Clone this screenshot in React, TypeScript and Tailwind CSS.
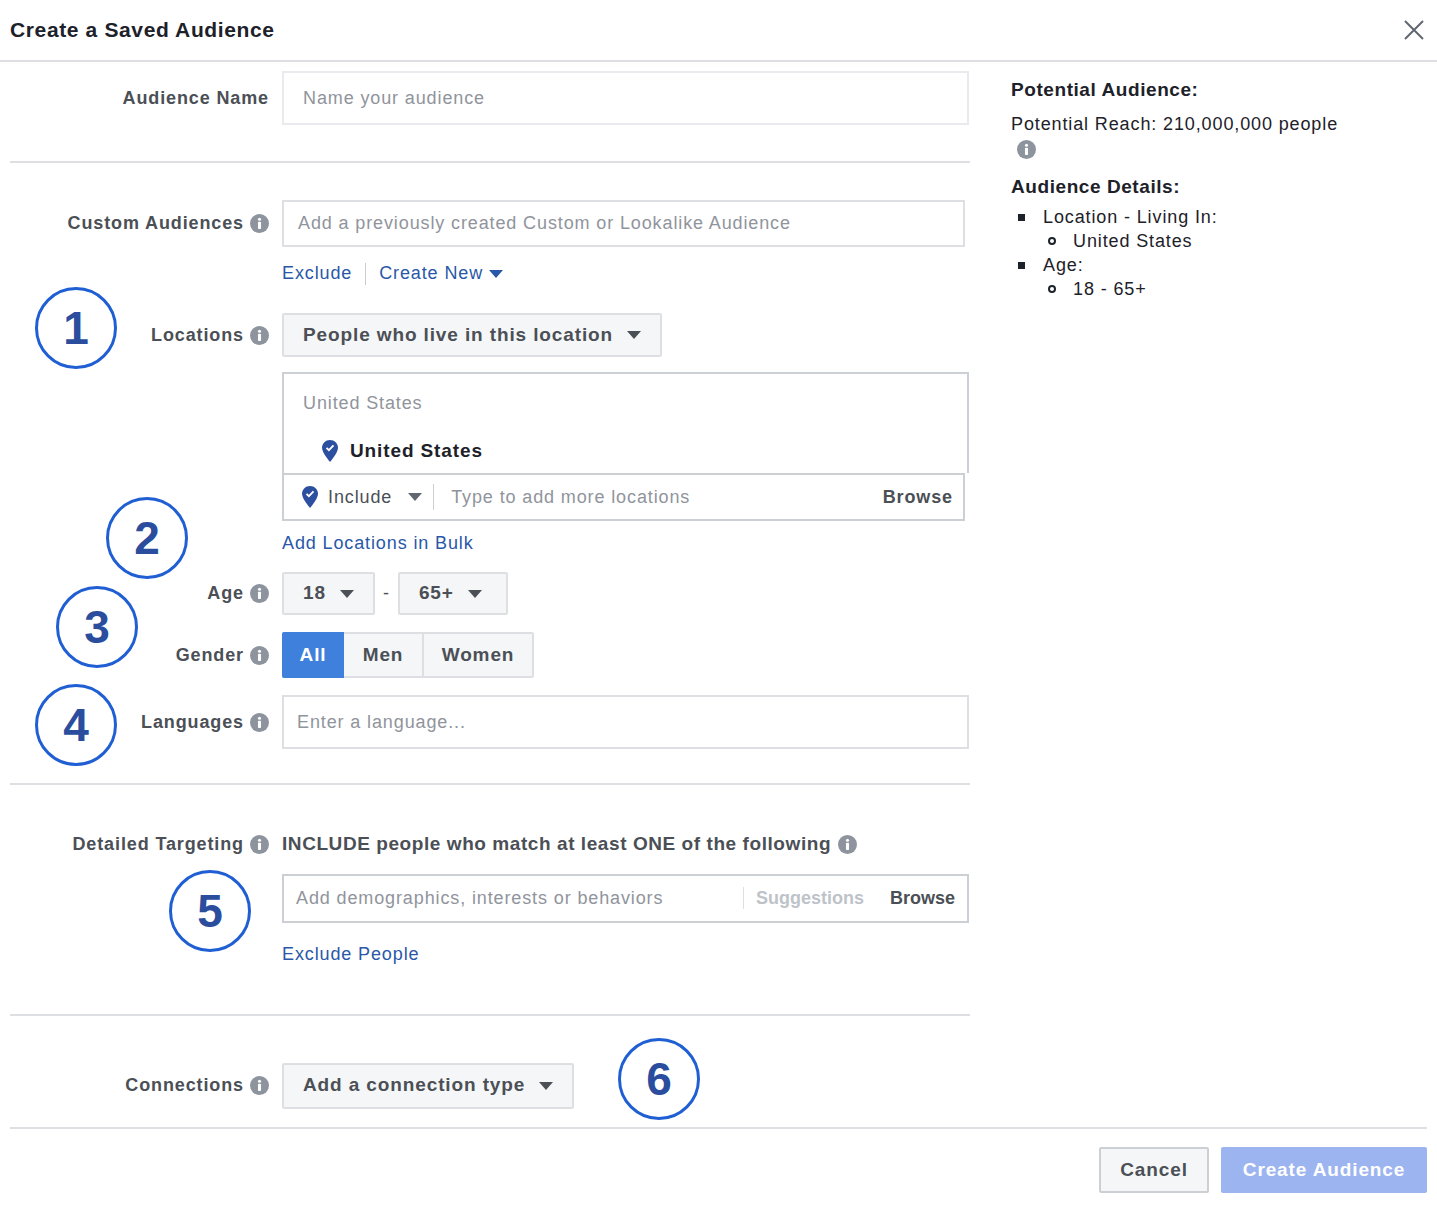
import React from "react";

const Info = ({ cls = "" }: { cls?: string }) => (
  <svg width="19" height="19" viewBox="0 0 20 20" className={cls}>
    <circle cx="10" cy="10" r="10" fill="#8d949e" />
    <circle cx="10" cy="5.5" r="1.6" fill="#fff" />
    <rect x="8.4" y="8.2" width="3.2" height="7.5" rx="0.8" fill="#fff" />
  </svg>
);

const Caret = ({ c = "#4b4f56" }: { c?: string }) => (
  <svg width="14" height="8" viewBox="0 0 14 8"><path d="M0 0h14L7 8z" fill={c} /></svg>
);

const Pin = () => (
  <svg width="16" height="22" viewBox="0 0 16 22">
    <path d="M8 0C3.6 0 0 3.4 0 7.8 0 13 8 22 8 22s8-9 8-14.2C16 3.4 12.4 0 8 0z" fill="#2d4fa0" />
    <path d="M4.5 7.8l2.4 2.4 4.6-4.8" stroke="#fff" strokeWidth="1.8" fill="none" />
  </svg>
);

const Circle = ({ n, x, y }: { n: string; x: number; y: number }) => (
  <div
    className="absolute w-[82px] h-[82px] rounded-full border-[3px] border-[#1f5fd3] bg-transparent flex items-center justify-center text-[46px] font-bold text-[#2a4d9e] leading-none tracking-normal"
    style={{ left: x - 41, top: y - 41 }}
  >
    {n}
  </div>
);

const Label = ({ t, info = true }: { t: string; info?: boolean }) => (
  <div className="w-[272px] shrink-0 flex justify-end items-center gap-[6px] pr-[13px] text-[18px] font-bold text-[#4b4f56]">
    <span>{t}</span>
    {info && <Info />}
  </div>
);

export default function App() {
  return (
    <div className="relative w-[1437px] h-[1211px] bg-white text-[#1d2129] overflow-hidden tracking-[0.055em]" style={{ fontFamily: '"Liberation Sans", Arial, sans-serif' }}>
      <div className="h-[62px] border-b-2 border-[#dddfe2] flex items-center justify-between px-[10px]">
        <div className="text-[21px] font-bold text-[#1d2129] tracking-[0.03em]">Create a Saved Audience</div>
        <svg width="22" height="22" viewBox="0 0 22 22" className="mr-[2px]"><path d="M2 2l18 18M20 2L2 20" stroke="#606770" strokeWidth="2" /></svg>
      </div>
      <div className="flex">
        <div className="w-[960px] ml-[10px]">
          {/* Audience name */}
          <div className="flex items-center pt-[9px] pb-[36px] border-b-2 border-[#dddfe2]">
            <Label t="Audience Name" info={false} />
            <div className="w-[687px] h-[54px] border-2 border-[#e9eaed] px-[19px] flex items-center text-[18px] text-[#90949c]">Name your audience</div>
          </div>
          {/* Custom audiences */}
          <div className="flex mt-[36px] h-[48px] items-center">
            <Label t="Custom Audiences" />
            <div className="w-[683px] h-[47px] border-2 border-[#dddfe2] px-[14px] flex items-center text-[18px] text-[#90949c]">Add a previously created Custom or Lookalike Audience</div>
          </div>
          <div className="flex mt-[13px] ml-[272px] items-center text-[18px] text-[#2a58a8]">
            <span>Exclude</span>
            <span className="w-px h-[22px] bg-[#c8ccd2] mx-[13px]" />
            <span>Create New</span>
            <span className="ml-[6px]"><Caret c="#2a58a8" /></span>
          </div>
          {/* Locations */}
          <div className="flex mt-[26px] items-center h-[44px]">
            <Label t="Locations" />
            <div className="h-[44px] px-[19px] bg-[#f5f6f7] border-2 border-[#dddfe2] rounded-[2px] flex items-center gap-[14px] text-[19px] font-bold text-[#4b4f56]">
              People who live in this location <Caret />
            </div>
          </div>
          <div className="ml-[272px] mt-[15px] w-[687px]">
            <div className="h-[101px] border-2 border-b-0 border-[#ccd0d5] px-[19px] pt-[16px]">
              <div className="text-[18px] text-[#90949c]">United States</div>
              <div className="flex items-center gap-[12px] mt-[20px] ml-[19px] text-[19px] font-bold text-[#1d2129]"><Pin />United States</div>
            </div>
            <div className="w-[683px] h-[48px] border-2 border-[#ccd0d5] flex items-center pl-[18px] pr-[10px] text-[18px]">
              <Pin />
              <span className="ml-[10px] text-[#4b4f56]">Include</span>
              <span className="ml-[16px]"><Caret c="#606770" /></span>
              <span className="w-px h-[26px] bg-[#ccd0d5] ml-[11px] mr-[17px]" />
              <span className="text-[#90949c] flex-1">Type to add more locations</span>
              <span className="font-bold text-[#4b4f56]">Browse</span>
            </div>
          </div>
          <div className="ml-[272px] mt-[9px] text-[18px] text-[#2a58a8]">Add Locations in Bulk</div>
          {/* Age */}
          <div className="flex mt-[15px] items-center h-[43px]">
            <Label t="Age" />
            <div className="h-[43px] w-[93px] bg-[#f5f6f7] border-2 border-[#dddfe2] rounded-[2px] flex items-center gap-[14px] px-[19px] text-[19px] font-bold text-[#4b4f56]">18 <Caret /></div>
            <span className="mx-[8px] text-[18px] text-[#4b4f56]">-</span>
            <div className="h-[43px] w-[110px] bg-[#f5f6f7] border-2 border-[#dddfe2] rounded-[2px] flex items-center gap-[14px] px-[19px] text-[19px] font-bold text-[#4b4f56]">65+ <Caret /></div>
          </div>
          {/* Gender */}
          <div className="flex mt-[17px] items-center h-[46px]">
            <Label t="Gender" />
            <div className="flex h-[46px] border-2 border-[#dddfe2] rounded-[2px] text-[19px] font-bold text-[#4b4f56] bg-[#f5f6f7]">
              <div className="w-[62px] -m-[2px] mr-0 bg-[#4080dd] text-white flex items-center justify-center rounded-l-[2px]">All</div>
              <div className="w-[80px] flex items-center justify-center border-r-2 border-[#dddfe2]">Men</div>
              <div className="w-[108px] flex items-center justify-center">Women</div>
            </div>
          </div>
          {/* Languages */}
          <div className="flex mt-[17px] items-center h-[54px]">
            <Label t="Languages" />
            <div className="w-[687px] h-[54px] border-2 border-[#dddfe2] px-[13px] flex items-center text-[18px] text-[#90949c]">Enter a language...</div>
          </div>
          <div className="mt-[34px] border-b-2 border-[#dddfe2]" />
          {/* Detailed targeting */}
          <div className="flex mt-[45px] items-center">
            <Label t="Detailed Targeting" />
            <div className="flex items-center gap-[7px] text-[19px] font-bold text-[#4b4f56] tracking-[0.03em]">INCLUDE people who match at least ONE of the following <Info /></div>
          </div>
          <div className="ml-[272px] mt-[15px] w-[687px] h-[49px] border-2 border-[#ccd0d5] flex items-center pl-[12px] pr-[12px] text-[18px]">
            <span className="flex-1 text-[#90949c]">Add demographics, interests or behaviors</span>
            <span className="w-px h-[22px] bg-[#dddfe2] mr-[12px]" />
            <span className="font-bold text-[#bec3c9] mr-[26px] tracking-normal">Suggestions</span>
            <span className="font-bold text-[#4b4f56] tracking-normal">Browse</span>
          </div>
          <div className="ml-[272px] mt-[18px] text-[18px] text-[#2a58a8]">Exclude People</div>
          <div className="mt-[46px] border-b-2 border-[#dddfe2]" />
          {/* Connections */}
          <div className="flex mt-[47px] items-center h-[46px]">
            <Label t="Connections" />
            <div className="h-[46px] px-[19px] bg-[#f5f6f7] border-2 border-[#dddfe2] rounded-[2px] flex items-center gap-[14px] text-[19px] font-bold text-[#4b4f56]">Add a connection type <Caret /></div>
          </div>
        </div>
        {/* Right panel */}
        <div className="ml-[41px] pt-[14px] text-[18px] text-[#1d2129]">
          <div className="font-bold text-[19px] tracking-[0.03em]">Potential Audience:</div>
          <div className="mt-[6px]">Potential Reach: 210,000,000 people</div>
          <div className="mt-[2px] ml-[6px]"><Info /></div>
          <div className="font-bold text-[19px] mt-[14px] tracking-[0.03em]">Audience Details:</div>
          <div className="mt-[4px] leading-[24px]">
            <div className="flex items-center"><span className="w-[7px] h-[7px] bg-[#1d2129] ml-[7px] mr-[18px]" />Location - Living In:</div>
            <div className="flex items-center ml-[37px]"><span className="w-[8px] h-[8px] rounded-full border-2 border-[#1d2129] mr-[17px]" />United States</div>
            <div className="flex items-center"><span className="w-[7px] h-[7px] bg-[#1d2129] ml-[7px] mr-[18px]" />Age:</div>
            <div className="flex items-center ml-[37px]"><span className="w-[8px] h-[8px] rounded-full border-2 border-[#1d2129] mr-[17px]" />18 - 65+</div>
          </div>
        </div>
      </div>
      {/* Footer */}
      <div className="absolute left-[10px] top-[1127px] w-[1417px] border-t-2 border-[#dddfe2] flex justify-end gap-[12px] pt-[18px]">
        <div className="h-[46px] w-[110px] bg-[#f5f6f7] border-2 border-[#ccd0d5] rounded-[2px] flex items-center justify-center text-[19px] font-bold text-[#4b4f56]">Cancel</div>
        <div className="h-[46px] w-[206px] bg-[#9cb4f0] rounded-[2px] flex items-center justify-center text-[19px] font-bold text-white">Create Audience</div>
      </div>
      <Circle n="1" x={76} y={328} />
      <Circle n="2" x={147} y={538} />
      <Circle n="3" x={97} y={627} />
      <Circle n="4" x={76} y={725} />
      <Circle n="5" x={210} y={911} />
      <Circle n="6" x={659} y={1079} />
    </div>
  );
}
